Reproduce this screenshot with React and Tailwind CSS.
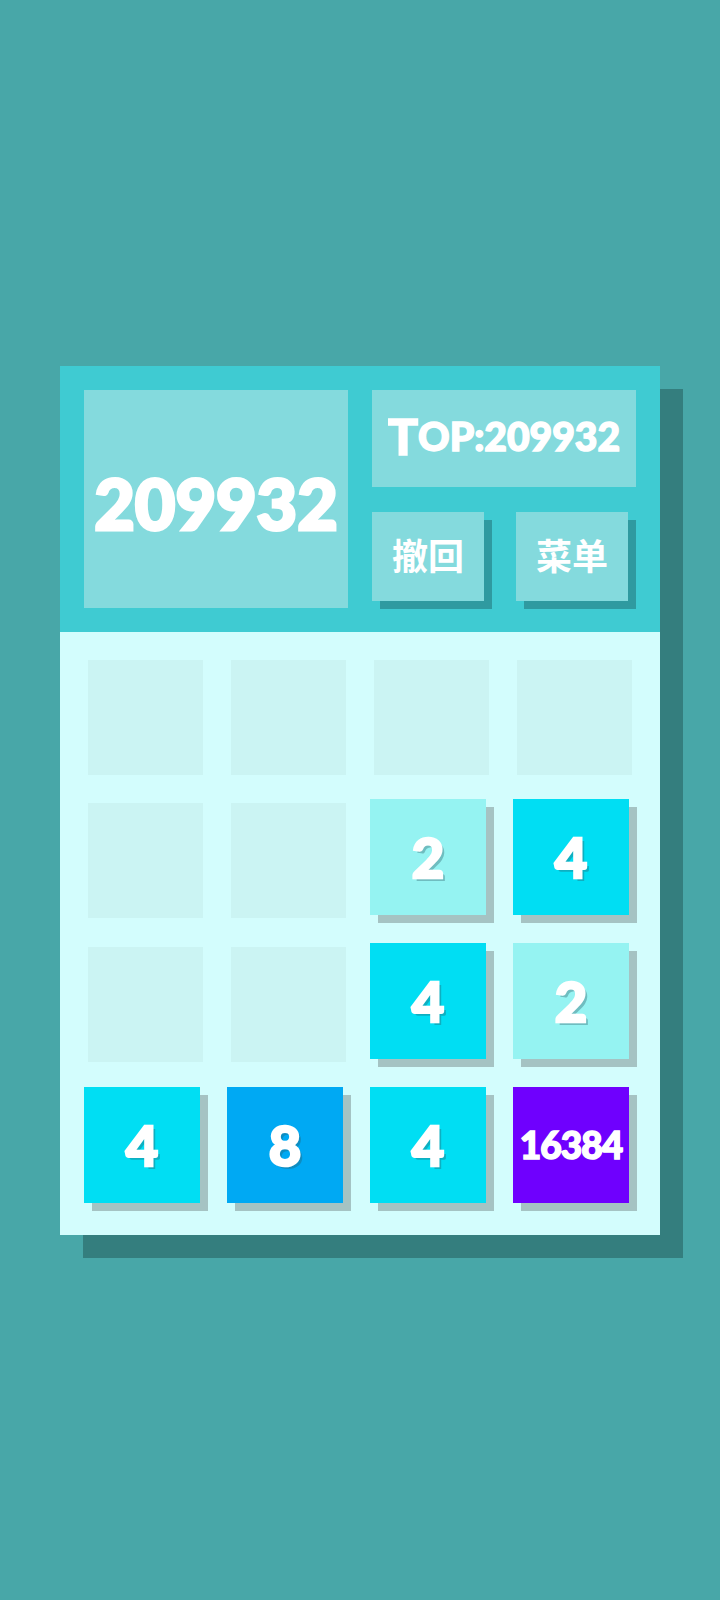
import React from "react";

const board = [
  [0, 0, 0, 0],
  [0, 0, 2, 4],
  [0, 0, 4, 2],
  [4, 8, 4, 16384],
];

const tileColors = {
  2: "bg-[#95f3f2]",
  4: "bg-[#00def3]",
  8: "bg-[#00a9f3]",
  16384: "bg-[#6f00fe]",
};

const Tile = ({ value }) => {
  if (!value) {
    return <div className="h-[115px] bg-[#cbf4f3]" />;
  }
  const big = value >= 1000;
  return (
    <div
      className={`h-[116px] w-[116px] -translate-x-[4px] -translate-y-[4px] flex items-center justify-center text-white font-black shadow-[8px_8px_0_#a5c3c3] ${tileColors[value]} ${
        big
          ? "text-[37px] tracking-[-1px] [-webkit-text-stroke:1.5px_white]"
          : "text-[56px] [-webkit-text-stroke:2.5px_white] [text-shadow:3px_3px_0_rgba(40,90,100,0.35)]"
      }`}
    >
      {value}
    </div>
  );
};

export default function App() {
  return (
    <div
      className="min-h-[1600px] w-full bg-[#48a7a8] flex items-center justify-center"
      style={{ fontFamily: "Lato, 'Noto Sans CJK SC', sans-serif" }}
    >
      <div className="w-[600px] shadow-[23px_23px_0_#347e7e]">
        {/* header */}
        <div className="h-[266px] bg-[#3fcbd2] p-6 flex gap-6">
          <div className="w-[264px] bg-[#84dadd] flex items-center justify-center text-white font-black text-[70px] leading-none pt-2 [-webkit-text-stroke:3px_white]">
            209932
          </div>
          <div className="w-[264px] flex flex-col">
            <div className="h-[97px] bg-[#84dadd] flex items-center justify-center text-white font-black leading-none pb-1 [-webkit-text-stroke:1.5px_white]">
              <span className="text-[50px]">T</span>
              <span className="text-[39px]">OP:209932</span>
            </div>
            <div className="mt-[25px] flex gap-8">
              <button className="w-[112px] h-[89px] bg-[#84dadd] shadow-[8px_8px_0_#2f9aa0] text-white font-bold text-[36px] flex items-center justify-center">
                撤回
              </button>
              <button className="w-[112px] h-[89px] bg-[#84dadd] shadow-[8px_8px_0_#2f9aa0] text-white font-bold text-[36px] flex items-center justify-center">
                菜单
              </button>
            </div>
          </div>
        </div>
        {/* board */}
        <div className="bg-[#d3fdfd] p-[28px] grid grid-cols-4 gap-[28px]">
          {board.flat().map((v, i) => (
            <Tile key={i} value={v} />
          ))}
        </div>
      </div>
    </div>
  );
}
